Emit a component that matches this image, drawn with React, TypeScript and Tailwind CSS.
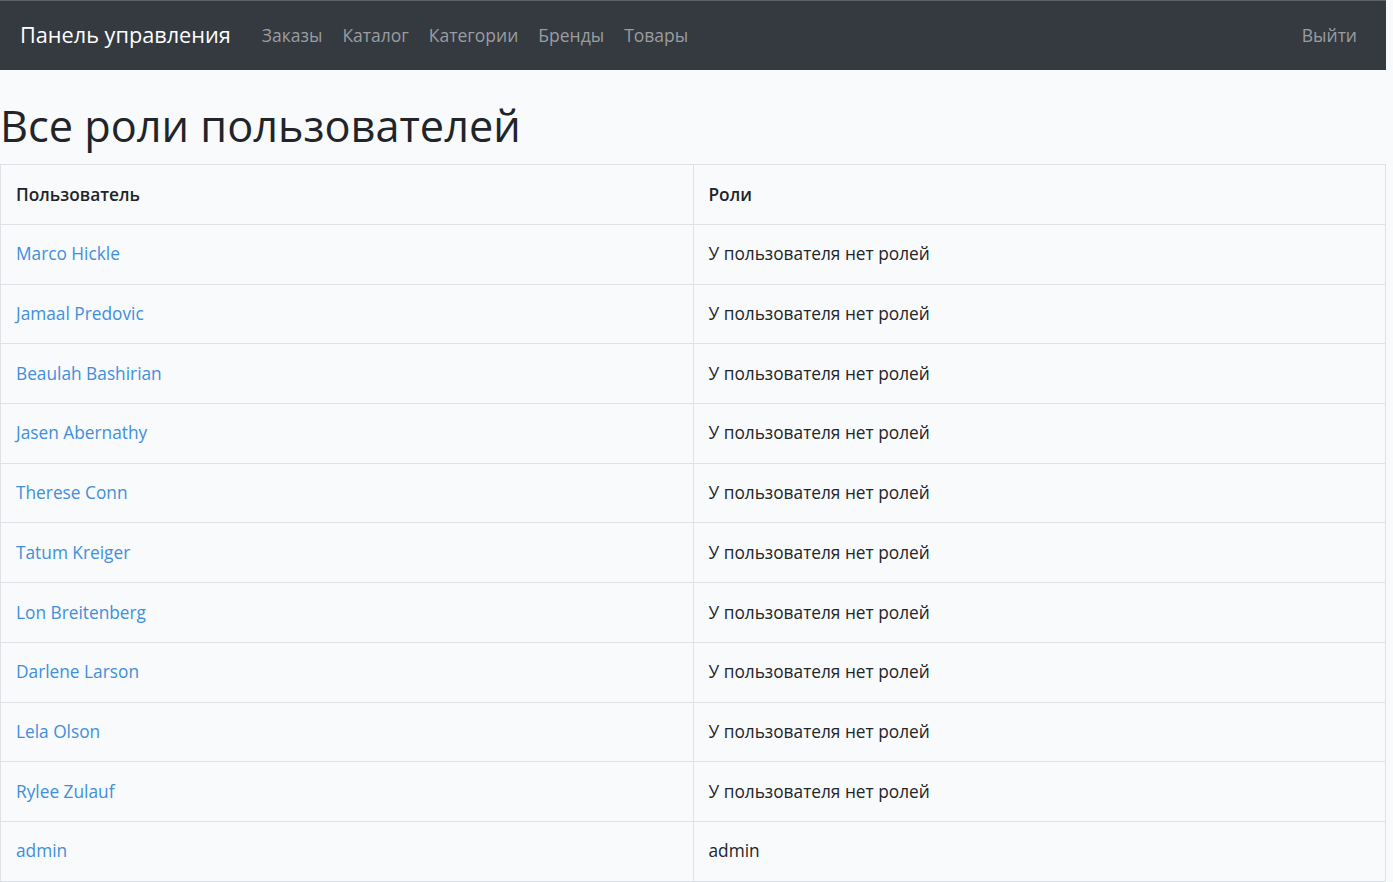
const users: { name: string; role: string }[] = [
  { name: 'Marco Hickle', role: 'У пользователя нет ролей' },
  { name: 'Jamaal Predovic', role: 'У пользователя нет ролей' },
  { name: 'Beaulah Bashirian', role: 'У пользователя нет ролей' },
  { name: 'Jasen Abernathy', role: 'У пользователя нет ролей' },
  { name: 'Therese Conn', role: 'У пользователя нет ролей' },
  { name: 'Tatum Kreiger', role: 'У пользователя нет ролей' },
  { name: 'Lon Breitenberg', role: 'У пользователя нет ролей' },
  { name: 'Darlene Larson', role: 'У пользователя нет ролей' },
  { name: 'Lela Olson', role: 'У пользователя нет ролей' },
  { name: 'Rylee Zulauf', role: 'У пользователя нет ролей' },
  { name: 'admin', role: 'admin' },
];

const links = ['Заказы', 'Каталог', 'Категории', 'Бренды', 'Товары'];

const App = () => {
  return (
    <div className="min-h-screen bg-[#f8fafc] font-['Open_Sans',sans-serif] text-[#212529]">
      <div className="w-[1386px]">
        <nav className="flex h-[70px] items-center border-t border-[#5c6068] bg-[#343a40] pl-[20px] pr-[29px]">
          <a href="#" className="mr-[31px] text-[21.7px] text-white">
            Панель управления
          </a>
          <div className="flex gap-[20px] text-[17.5px] text-[#9a9da0]">
            {links.map((l) => (
              <a key={l} href="#">
                {l}
              </a>
            ))}
          </div>
          <a href="#" className="ml-auto text-[17.5px] text-[#9a9da0]">
            Выйти
          </a>
        </nav>

        <h1 className="pt-[29px] pb-[11px] text-[43.3px] leading-[54px] font-normal">
          Все роли пользователей
        </h1>

        <table className="w-full table-fixed border-collapse text-[17.3px]">
          <thead>
            <tr>
              <th className="h-[60px] border border-[#dee2e6] px-[15px] text-left font-semibold">
                Пользователь
              </th>
              <th className="h-[60px] border border-[#dee2e6] px-[15px] text-left font-semibold">
                Роли
              </th>
            </tr>
          </thead>
          <tbody>
            {users.map((u) => (
              <tr key={u.name}>
                <td className="h-[59.7px] border border-[#dee2e6] px-[15px]">
                  <a href="#" className="text-[#3f8fdb]">
                    {u.name}
                  </a>
                </td>
                <td className="h-[59.7px] border border-[#dee2e6] px-[15px]">
                  {u.role}
                </td>
              </tr>
            ))}
          </tbody>
        </table>
      </div>
    </div>
  );
};

export default App;
